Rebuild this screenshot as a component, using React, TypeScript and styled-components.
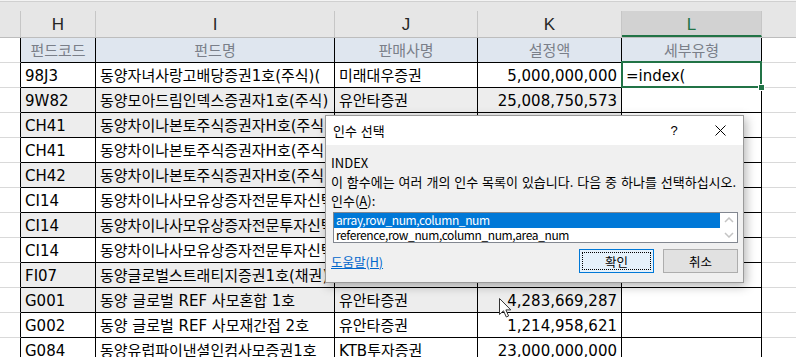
import React from "react";
import styled, { createGlobalStyle } from "styled-components";

const COLS = "21px 75px 239px 143px 144px 140px 1fr";

const GlobalStyle = createGlobalStyle`
  body {
    margin: 0;
    background: #fff;
    overflow: hidden;
  }
`;

interface FundRow {
    code: string;
    name: string;
    seller: string;
    amount: string;
    band?: boolean;
    formula?: string;
}

const rows: FundRow[] = [
    { code: "98J3", name: "동양자녀사랑고배당증권1호(주식)(", seller: "미래대우증권", amount: "5,000,000,000", formula: "=index(" },
    { code: "9W82", name: "동양모아드림인덱스증권자1호(주식)", seller: "유안타증권", amount: "25,008,750,573", band: true },
    { code: "CH41", name: "동양차이나본토주식증권자H호(주식)", seller: "유안타증권", amount: "3,512,004,210", band: true },
    { code: "CH41", name: "동양차이나본토주식증권자H호(주식)", seller: "미래대우증권", amount: "1,106,390,045" },
    { code: "CH42", name: "동양차이나본토주식증권자H호(주식)", seller: "유안타증권", amount: "2,830,117,602", band: true },
    { code: "CI14", name: "동양차이나사모유상증자전문투자신탁", seller: "유안타증권", amount: "6,000,000,000" },
    { code: "CI14", name: "동양차이나사모유상증자전문투자신탁", seller: "KTB투자증권", amount: "4,500,000,000", band: true },
    { code: "CI14", name: "동양차이나사모유상증자전문투자신탁", seller: "미래대우증권", amount: "2,000,000,000" },
    { code: "FI07", name: "동양글로벌스트래티지증권1호(채권)", seller: "유안타증권", amount: "3,741,205,118", band: true },
    { code: "G001", name: "동양 글로벌 REF 사모혼합 1호", seller: "유안타증권", amount: "4,283,669,287", band: true },
    { code: "G002", name: "동양 글로벌 REF 사모재간접 2호", seller: "유안타증권", amount: "1,214,958,621" },
    { code: "G084", name: "동양유럽파이낸셜인컴사모증권1호", seller: "KTB투자증권", amount: "23,000,000,000" },
];

const App: React.FC = () => {
    return (
        <Wrapper>
            <GlobalStyle />
            <TopStrip />
            <HeaderBar>
                <ColHead />
                <ColHead>H</ColHead>
                <ColHead>I</ColHead>
                <ColHead>J</ColHead>
                <ColHead>K</ColHead>
                <ColHead $active>L</ColHead>
                <ColHead $last />
            </HeaderBar>

            {/* table header */}
            <Row>
                <Gutter />
                <Cell $head $align="center">펀드코드</Cell>
                <Cell $head $align="center">펀드명</Cell>
                <Cell $head $align="center">판매사명</Cell>
                <Cell $head $align="center">설정액</Cell>
                <Cell $head $align="center">세부유형</Cell>
                <Extra />
            </Row>

            {rows.map((r, i) => (
                <Row key={i}>
                    <Gutter />
                    <Cell $band={r.band}>{r.code}</Cell>
                    <Cell $band={r.band}>{r.name}</Cell>
                    <Cell $band={r.band}>{r.seller}</Cell>
                    <Cell $band={r.band} $align="right">{r.amount}</Cell>
                    {r.formula ? (
                        <ActiveCell>
                            {r.formula}
                            <SelectionFrame />
                            <FillHandle />
                        </ActiveCell>
                    ) : (
                        <Cell />
                    )}
                    <Extra />
                </Row>
            ))}

            <Dialog>
                <TitleBar>
                    <Title>인수 선택</Title>
                    <TitleButton>?</TitleButton>
                    <TitleButton>
                        <svg width="11" height="11" viewBox="0 0 11 11">
                            <path d="M0.5 0.5 L10.5 10.5 M10.5 0.5 L0.5 10.5" stroke="#000" strokeWidth="1" />
                        </svg>
                    </TitleButton>
                </TitleBar>
                <DialogBody>
                    <TextLine>INDEX</TextLine>
                    <TextLine>이 함수에는 여러 개의 인수 목록이 있습니다. 다음 중 하나를 선택하십시오.</TextLine>
                    <TextLine>인수(<u>A</u>):</TextLine>
                    <ListBox>
                        <ListItems>
                            <ListItem $selected>array,row_num,column_num</ListItem>
                            <ListItem>reference,row_num,column_num,area_num</ListItem>
                        </ListItems>
                        <ScrollTrack>
                            <svg width="10" height="6" viewBox="0 0 10 6">
                                <path d="M1 5 L5 1 L9 5" fill="none" stroke="#c4c4c4" strokeWidth="1.5" />
                            </svg>
                            <svg width="10" height="6" viewBox="0 0 10 6">
                                <path d="M1 1 L5 5 L9 1" fill="none" stroke="#c4c4c4" strokeWidth="1.5" />
                            </svg>
                        </ScrollTrack>
                    </ListBox>
                    <ButtonRow>
                        <HelpLink>도움말(H)</HelpLink>
                        <DlgButton $primary>확인</DlgButton>
                        <DlgButton>취소</DlgButton>
                    </ButtonRow>
                </DialogBody>
            </Dialog>

            <Pointer width="13" height="20" viewBox="0 0 13 20">
                <path d="M0.5 0.5 L0.5 16.5 L4.5 12.8 L7.3 19 L9.6 18 L6.9 11.9 L11.8 11.9 Z" fill="#fff" stroke="#333" strokeWidth="1" />
            </Pointer>
        </Wrapper>
    );
};

const Wrapper = styled.div`
    position: relative;
    width: 796px;
    height: 357px;
    overflow: hidden;
    font-family: "DejaVu Sans", "Noto Sans CJK KR", sans-serif;
    font-size: 15px;
    color: #000;
`;

const TopStrip = styled.div`
    height: 1px;
    background: #f3f3f3;
    border-bottom: 1px solid #d0d0d0;
`;

const HeaderBar = styled.div`
    display: grid;
    grid-template-columns: ${COLS};
    align-items: end;
    height: 36px;
    background: #e6e6e6;
    border-bottom: 1px solid #bdbdbd;
    box-sizing: border-box;
`;

const ColHead = styled.div<{ $active?: boolean; $last?: boolean }>`
    box-sizing: border-box;
    height: 26px;
    padding-top: 3px;
    border-right: ${(p) => (p.$last ? "none" : "1px solid #c6c6c6")};
    border-bottom: ${(p) => (p.$active ? "2px solid #217346" : "none")};
    background: ${(p) => (p.$active ? "#d2d2d2" : "transparent")};
    color: ${(p) => (p.$active ? "#217346" : "#262626")};
    font-family: "Liberation Sans", Arial, sans-serif;
    font-size: 17px;
    text-align: center;
    line-height: 22px;
`;

const Row = styled.div`
    display: grid;
    grid-template-columns: ${COLS};
    height: 25px;
`;

const Gutter = styled.div`
    box-sizing: border-box;
    border-right: 1px solid #000;
    border-bottom: 1px solid #d9d9d9;
`;

const Extra = styled.div`
    border-bottom: 1px solid #d9d9d9;
`;

const Cell = styled.div<{ $head?: boolean; $band?: boolean; $align?: "left" | "center" | "right" }>`
    box-sizing: border-box;
    min-width: 0;
    height: 25px;
    padding: 2px 4px 0;
    border-right: 1px solid #000;
    border-bottom: 1px solid #000;
    background: ${(p) => (p.$head ? "#dfe6ef" : p.$band ? "#ededed" : "#fff")};
    color: ${(p) => (p.$head ? "#7a7f89" : "#000")};
    text-align: ${(p) => p.$align || "left"};
    line-height: 22px;
    white-space: nowrap;
    overflow: hidden;
`;

const ActiveCell = styled(Cell)`
    position: relative;
    overflow: visible;
`;

const SelectionFrame = styled.div`
    position: absolute;
    inset: -2px -1px -1px -1px;
    border: 2px solid #217346;
    z-index: 2;
`;

const FillHandle = styled.div`
    position: absolute;
    right: -4px;
    bottom: -4px;
    width: 5px;
    height: 5px;
    background: #217346;
    border: 1px solid #fff;
    z-index: 3;
`;

const Dialog = styled.div`
    position: absolute;
    left: 325px;
    top: 115px;
    width: 419px;
    box-sizing: border-box;
    border: 1px solid #9a9a9a;
    box-shadow: 2px 3px 10px rgba(0, 0, 0, 0.3);
    font-family: "Noto Sans CJK KR", sans-serif;
    font-size: 13px;
    z-index: 5;
`;

const TitleBar = styled.div`
    display: flex;
    align-items: center;
    height: 29px;
    background: #fff;
    padding-left: 7px;
`;

const Title = styled.div`
    flex: 1;
    font-size: 13px;
    word-spacing: 1px;
`;

const TitleButton = styled.div`
    width: 46px;
    height: 29px;
    display: flex;
    align-items: center;
    justify-content: center;
    font-family: "Liberation Sans", Arial, sans-serif;
    font-size: 13px;
`;

const DialogBody = styled.div`
    background: #f0f0f0;
    padding: 8px 5px 9px 5px;
`;

const TextLine = styled.div`
    line-height: 19px;
    white-space: nowrap;
    word-spacing: 1px;

    u {
        text-underline-offset: 2px;
    }
`;

const ListBox = styled.div`
    display: flex;
    margin: 2px 0 0 2px;
    width: 405px;
    height: 31px;
    box-sizing: border-box;
    border: 1px solid #828790;
    background: #fff;
`;

const ListItems = styled.div`
    flex: 1;
    display: flex;
    flex-direction: column;
`;

const ListItem = styled.div<{ $selected?: boolean }>`
    height: 15px;
    line-height: 14px;
    padding-left: 2px;
    font-size: 12px;
    letter-spacing: -0.4px;
    background: ${(p) => (p.$selected ? "#0078d7" : "transparent")};
    color: ${(p) => (p.$selected ? "#fff" : "#000")};
    white-space: nowrap;
`;

const ScrollTrack = styled.div`
    width: 17px;
    display: flex;
    flex-direction: column;
    justify-content: space-between;
    align-items: center;
    padding: 4px 0;
    box-sizing: border-box;
`;

const ButtonRow = styled.div`
    display: flex;
    align-items: center;
    gap: 9px;
    margin-top: 6px;
    height: 24px;
`;

const HelpLink = styled.a`
    flex: 1;
    color: #0066cc;
    text-decoration: underline;
    font-size: 12.5px;
`;

const DlgButton = styled.div<{ $primary?: boolean }>`
    position: relative;
    box-sizing: border-box;
    width: 75px;
    height: 24px;
    display: flex;
    align-items: center;
    justify-content: center;
    border: 1px solid ${(p) => (p.$primary ? "#0078d7" : "#adadad")};
    background: ${(p) => (p.$primary ? "#e5f1fb" : "#e1e1e1")};
    outline: ${(p) => (p.$primary ? "1px dotted #000" : "none")};
    outline-offset: -4px;
    font-size: 12.5px;
`;

const Pointer = styled.svg`
    position: absolute;
    left: 499px;
    top: 298px;
    z-index: 6;
`;

export default App;
